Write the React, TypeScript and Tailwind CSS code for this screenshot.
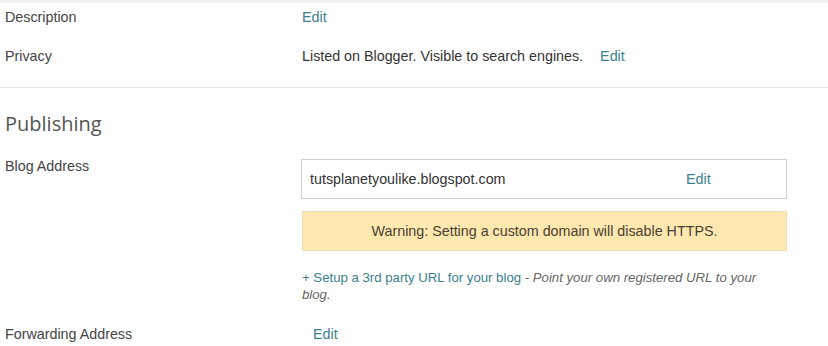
import React from 'react';

const linkCls = "text-[#3b7f8e] cursor-pointer";

function Row({ label, children, className }: { label: string; children: React.ReactNode; className?: string }) {
  return (
    <div className={`flex items-center ${className ?? ""}`}>
      <div className="w-[302px] pl-[5px] text-[#444]">{label}</div>
      <div className="flex items-center">{children}</div>
    </div>
  );
}

export default function App() {
  return (
    <div className="w-[828px] h-[346px] overflow-hidden bg-white border-t-[3px] border-[#f1f1f1] font-['Liberation_Sans',Arial,sans-serif] text-[14.3px] leading-[18px] text-[#333]">
      <Row label="Description" className="h-[28px]">
        <span className={linkCls}>Edit</span>
      </Row>
      <Row label="Privacy" className="h-[50px]">
        <span>Listed on Blogger. Visible to search engines.</span>
        <span className={`${linkCls} ml-[17px]`}>Edit</span>
      </Row>

      <div className="mt-[6px] border-t border-[#e5e5e5]" />

      <h2 className="mt-[22px] h-[28px] flex items-center pl-[5px] font-['Open_Sans',sans-serif] text-[20px] text-[#555]">
        Publishing
      </h2>

      <div className="mt-[19px] flex">
        <div className="w-[301px] pl-[5px] text-[#444]">Blog Address</div>
        <div className="w-[486px]">
          <div className="mt-[2px] h-[40px] flex items-center border border-[#d0d0d0] pl-[8px]">
            <span className="flex-1">tutsplanetyoulike.blogspot.com</span>
            <span className={`${linkCls} w-[100px]`}>Edit</span>
          </div>
          <div className="mt-[12px] ml-[1px] h-[40px] flex items-center justify-center border border-[#eadfb8] bg-[#fde8b0] text-[#4a4030]">
            Warning: Setting a custom domain will disable HTTPS.
          </div>
          <p className="mt-[18px] ml-[1px] text-[13.2px] leading-[17px]">
            <span className={linkCls}>+ Setup a 3rd party URL for your blog</span>
            <span className="text-[#666] italic"> - Point your own registered URL to your blog.</span>
          </p>
        </div>
      </div>

      <div className="mt-[22px] flex items-center h-[18px]">
        <div className="w-[313px] pl-[5px] text-[#444]">Forwarding Address</div>
        <span className={linkCls}>Edit</span>
      </div>
    </div>
  );
}
